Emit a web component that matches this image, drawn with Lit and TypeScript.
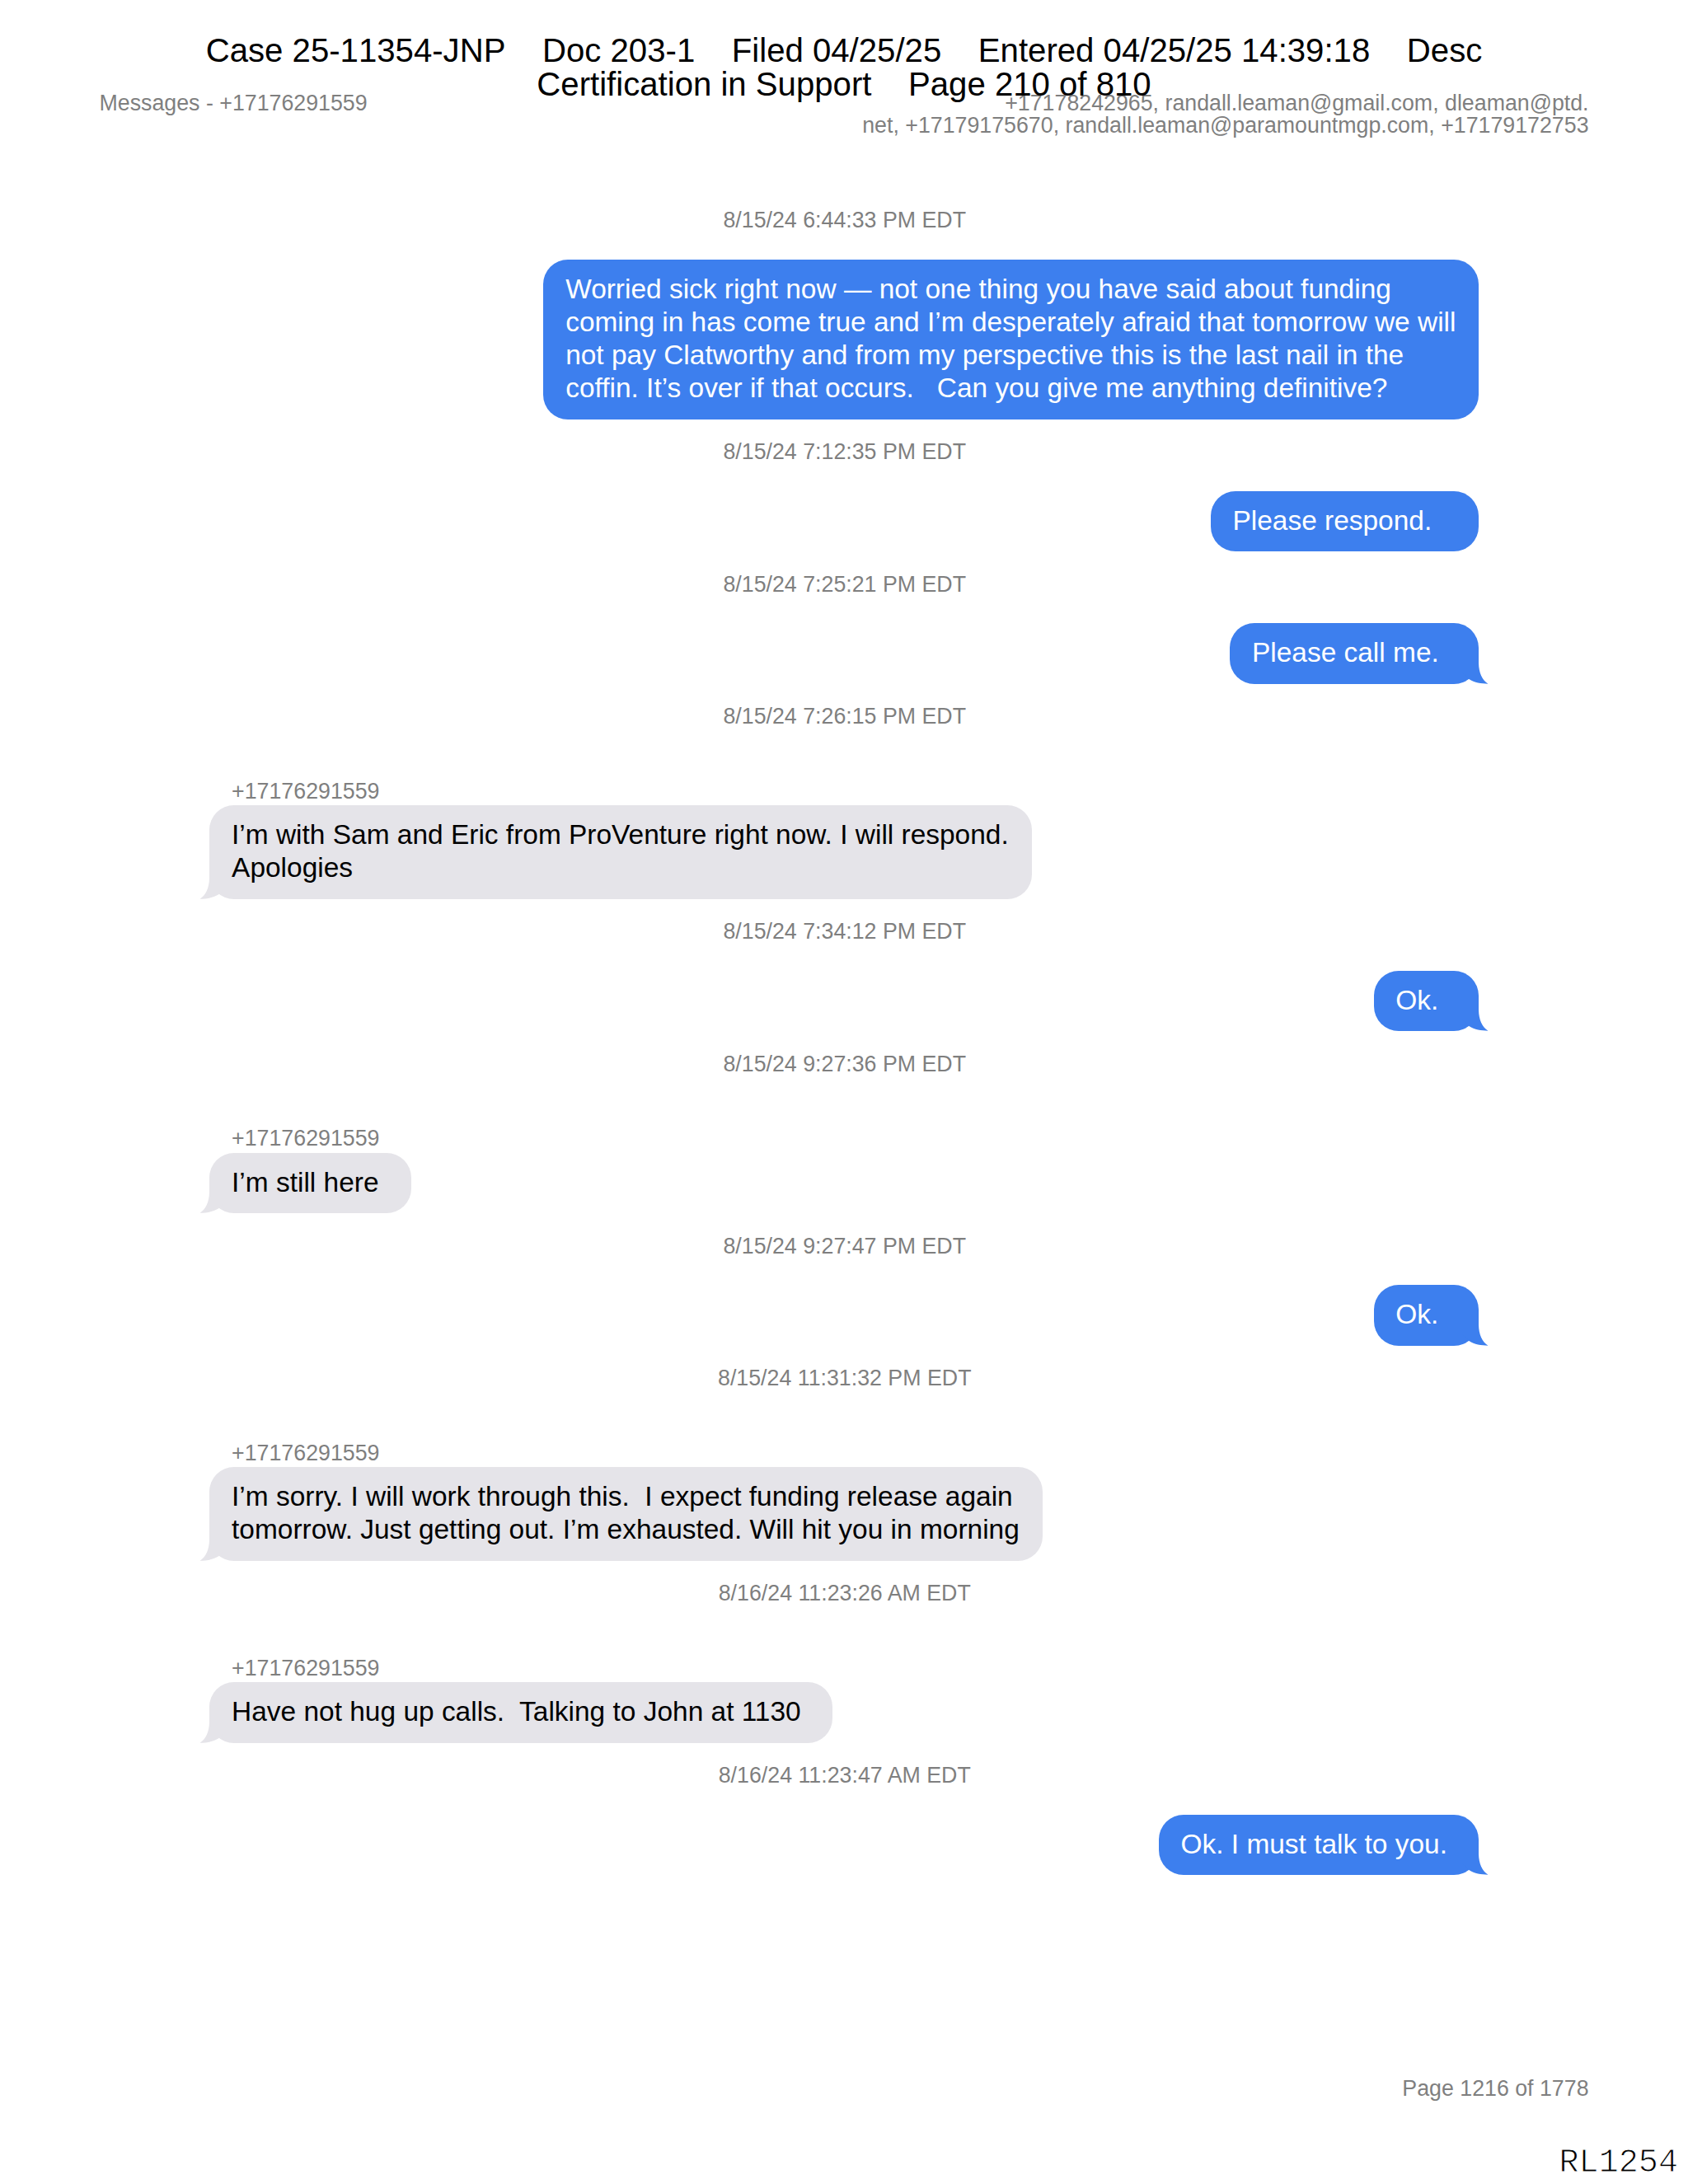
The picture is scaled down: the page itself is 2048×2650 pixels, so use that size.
import {LitElement, html, css, nothing} from 'lit';
import {customElement, property} from 'lit/decorators.js';
import {classMap} from 'lit/directives/class-map.js';
import {styleMap} from 'lit/directives/style-map.js';

interface Message {
  time: string;
  text: string;
  // Bubble width in px.
  width: number;
  sender?: string;
  tail?: boolean;
}

const SENDER = '+17176291559';

const messages: Message[] = [
  {
    time: '8/15/24 6:44:33 PM EDT',
    text: 'Worried sick right now — not one thing you have said about funding\ncoming in has come true and I’m desperately afraid that tomorrow we will\nnot pay Clatworthy and from my perspective this is the last nail in the\ncoffin. It’s over if that occurs.   Can you give me anything definitive?',
    width: 1134.3,
  },
  {
    time: '8/15/24 7:12:35 PM EDT',
    text: 'Please respond.',
    width: 325,
  },
  {
    time: '8/15/24 7:25:21 PM EDT',
    text: 'Please call me.',
    width: 301.5,
    tail: true,
  },
  {
    time: '8/15/24 7:26:15 PM EDT',
    text: 'I’m with Sam and Eric from ProVenture right now. I will respond.\nApologies',
    width: 997.2,
    sender: SENDER,
    tail: true,
  },
  {
    time: '8/15/24 7:34:12 PM EDT',
    text: 'Ok.',
    width: 127.2,
    tail: true,
  },
  {
    time: '8/15/24 9:27:36 PM EDT',
    text: 'I’m still here',
    width: 244.4,
    sender: SENDER,
    tail: true,
  },
  {
    time: '8/15/24 9:27:47 PM EDT',
    text: 'Ok.',
    width: 127.2,
    tail: true,
  },
  {
    time: '8/15/24 11:31:32 PM EDT',
    text: 'I’m sorry. I will work through this.  I expect funding release again\ntomorrow. Just getting out. I’m exhausted. Will hit you in morning',
    width: 1010.4,
    sender: SENDER,
    tail: true,
  },
  {
    time: '8/16/24 11:23:26 AM EDT',
    text: 'Have not hug up calls.  Talking to John at 1130',
    width: 755.8,
    sender: SENDER,
    tail: true,
  },
  {
    time: '8/16/24 11:23:47 AM EDT',
    text: 'Ok. I must talk to you.',
    width: 388,
    tail: true,
  },
];

@customElement('message-entry')
export class MessageEntry extends LitElement {
  @property({ type: Object }) message!: Message;

  static styles = css`
    :host {
      display: flex;
      flex-direction: column;
    }

    .time {
      padding: calc(7 * var(--pt)) 0 calc(9 * var(--pt)) 1.5px;
      font-size: calc(8 * var(--pt));
      line-height: calc(10 * var(--pt));
      text-align: center;
      color: var(--muted);
    }

    .sender {
      margin-top: calc(8 * var(--pt));
      padding-left: calc(8 * var(--pt));
      font-size: calc(8 * var(--pt));
      line-height: calc(10 * var(--pt));
      color: var(--muted);
    }

    .bubble {
      position: relative;
      box-sizing: border-box;
      align-self: flex-end;
      padding: calc(4.8 * var(--pt)) 0 calc(5.2 * var(--pt)) calc(8 * var(--pt));
      border-radius: 30px;
      color: #fff;
      background: #3d7fee;
    }

    .bubble--received {
      align-self: flex-start;
      color: #000;
      background: #e5e4e9;
    }

    .text {
      font-size: calc(10 * var(--pt));
      line-height: calc(12 * var(--pt));
      white-space: pre;
    }

    .tail {
      position: absolute;
      right: -13px;
      bottom: 0;
      width: 33px;
      height: 34px;
      fill: #3d7fee;
    }

    .bubble--received .tail {
      right: auto;
      left: -13px;
      transform: scaleX(-1);
      fill: #e5e4e9;
    }
  `;

  override render() {
    const { time, text, width, sender, tail } = this.message;

    const tailShape = tail
      ? html`
        <svg class="tail" viewBox="-20 -34 33 34" aria-hidden="true">
          <path d="M-20 -34H0V-25C0.3 -14 4 -5 11.5 -0.3C3 -0.4 -5 -1.7 -11.7 -6L-20 -14Z" />
        </svg>
      `
      : nothing;

    return html`
      <div class="time">${time}</div>
      ${sender ? html`<div class="sender">${sender}</div>` : nothing}
      <div
        class=${classMap({ 'bubble': true, 'bubble--received': !!sender })}
        style=${styleMap({ width: `${width}px` })}
      >
        <div class="text">${text}</div>
        ${tailShape}
      </div>
    `;
  }
}

@customElement('app-root')
export class AppRoot extends LitElement {
  static styles = css`
    :host {
      --pt: 3.3464px;
      --muted: #7f7f7f;
      position: relative;
      display: flex;
      flex-direction: column;
      box-sizing: border-box;
      height: 2650px;
      padding-top: 112px;
      overflow: hidden;
      font-family: "Liberation Sans", Arial, sans-serif;
      background: #fff;
    }

    /* Court filing stamp, printed over the top of the page */
    .stamp {
      position: absolute;
      top: 42.4px;
      left: 0;
      right: 0;
      font-size: calc(12 * var(--pt));
      line-height: calc(12 * var(--pt));
      font-kerning: none;
      text-align: center;
      white-space: pre;
      color: #000;
    }

    .header {
      display: flex;
      flex: none;
      justify-content: space-between;
      height: 115.5px;
      padding: 0 calc(36 * var(--pt));
      font-size: calc(8 * var(--pt));
      line-height: calc(8 * var(--pt));
      color: var(--muted);
    }

    .recipients {
      text-align: right;
      white-space: pre;
    }

    .thread {
      flex: 1;
      padding: 0 calc(76 * var(--pt));
    }

    .page-number {
      padding-right: calc(36 * var(--pt));
      font-size: calc(8 * var(--pt));
      line-height: calc(10 * var(--pt));
      text-align: right;
      color: var(--muted);
    }

    /* The white stroke thins the strokes of the stamped number */
    .bates {
      padding: 54px 12px 4.5px 0;
      font-family: "Liberation Mono", "Courier New", monospace;
      font-size: calc(12 * var(--pt));
      line-height: calc(12 * var(--pt));
      text-align: right;
      color: #000;
      -webkit-text-stroke: 1px #fff;
    }
  `;

  override render() {
    return html`
      <header class="header">
        <div>Messages - ${SENDER}</div>
        <div class="recipients">${'+17178242965, randall.leaman@gmail.com, dleaman@ptd.\nnet, +17179175670, randall.leaman@paramountmgp.com, +17179172753'}</div>
      </header>
      <div class="stamp">${'Case 25-11354-JNP    Doc 203-1    Filed 04/25/25    Entered 04/25/25 14:39:18    Desc\nCertification in Support    Page 210 of 810'}</div>
      <main class="thread">
        ${messages.map((message) => html`<message-entry .message=${message}></message-entry>`)}
      </main>
      <div class="page-number">Page 1216 of 1778</div>
      <div class="bates">RL1254</div>
    `;
  }
}
